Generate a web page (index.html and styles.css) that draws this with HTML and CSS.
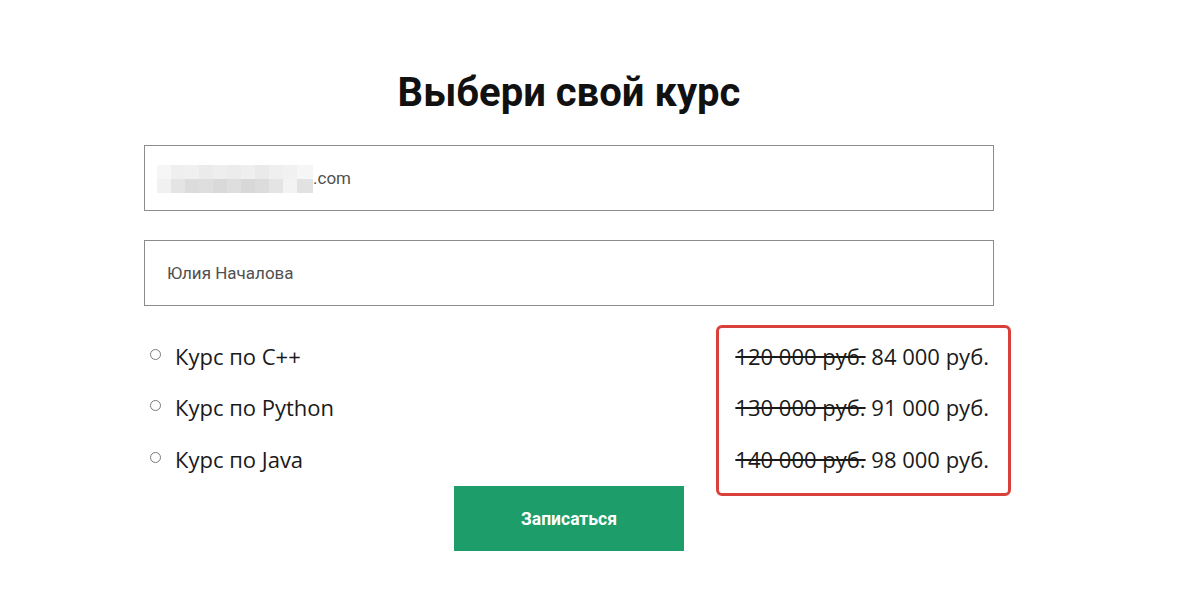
FILE: index.html
```html
<!DOCTYPE html>
<html lang="ru">
<head>
<meta charset="utf-8">
<title>Выбери свой курс</title>
<link rel="stylesheet" href="styles.css">
</head>
<body>
<main class="page">
  <h1 class="title">Выбери свой курс</h1>
  <div class="field field-email"><span class="blur"></span><span class="field-text">.com</span></div>
  <div class="field field-name"><span class="field-text">Юлия Началова</span></div>
  <div class="options">
    <div class="row">
      <label class="opt"><span class="radio"></span>Курс по C++</label>
      <div class="price"><s>120 000 руб.</s> 84 000 руб.</div>
    </div>
    <div class="row">
      <label class="opt"><span class="radio"></span>Курс по Python</label>
      <div class="price"><s>130 000 руб.</s> 91 000 руб.</div>
    </div>
    <div class="row">
      <label class="opt"><span class="radio"></span>Курс по Java</label>
      <div class="price"><s>140 000 руб.</s> 98 000 руб.</div>
    </div>
    <div class="highlight"></div>
  </div>
  <button class="submit">Записаться</button>
</main>
</body>
</html>
```
FILE: styles.css
```css
html, body {
  margin: 0;
  background: #fff;
}
.page {
  width: 850px;
  margin-left: 144px;
  padding-top: 68px;
  font-family: Roboto, "Liberation Sans", sans-serif;
}
.title {
  margin: 0 0 27px;
  font: 700 40px/50px Roboto, "Liberation Sans", sans-serif;
  color: #111;
  text-align: center;
}
.field {
  box-sizing: border-box;
  height: 66px;
  border: 1px solid #8c8c8c;
  margin-bottom: 29px;
  display: flex;
  align-items: center;
  font-size: 17px;
  color: #505050;
}
.field-email {
  padding-left: 12px;
}
.field-name {
  padding-left: 22px;
  margin-bottom: 24px;
}
.blur {
  display: block;
  width: 156px;
  height: 28px;
  margin-top: 2px;
  background:
    linear-gradient(to right, #f6f6f6 0 14px, #efefef 14px 28px, #f0f0f0 28px 42px, #ebebeb 42px 56px, #eeeeee 56px 70px, #ececec 70px 84px, #efefef 84px 98px, #eaeaea 98px 112px, #efefef 112px 126px, #f1f1f1 126px 140px, #f6f6f6 140px 156px) top / 100% 50% no-repeat,
    linear-gradient(to right, #f1f1f1 0 14px, #e4e4e4 14px 28px, #dcdcdc 28px 42px, #dedede 42px 56px, #d9d9d9 56px 70px, #dedede 70px 84px, #d8d8d8 84px 98px, #dcdcdc 98px 112px, #e4e4e4 112px 126px, #f3f3f3 126px 140px, #e2e2e2 140px 156px) bottom / 100% 50% no-repeat;
}
.options {
  position: relative;
  padding-right: 5px;
}
.row {
  height: 51.5px;
  display: flex;
  align-items: center;
  justify-content: space-between;
  font: 400 22px "Open Sans", "Noto Sans", sans-serif;
  color: #1a1a1a;
}
.opt {
  display: flex;
  align-items: center;
  padding-left: 6px;
}
.radio {
  box-sizing: border-box;
  width: 11px;
  height: 11px;
  border: 1px solid #7a7a7a;
  border-radius: 50%;
  margin-right: 14px;
  margin-top: -3px;
}
.price s {
  text-decoration-thickness: 1.5px;
}
.highlight {
  position: absolute;
  left: 572px;
  top: -5px;
  width: 295px;
  height: 171px;
  box-sizing: border-box;
  border: 3px solid #d9403a;
  border-radius: 6px;
}
.submit {
  display: block;
  margin: 1.5px auto 0;
  width: 230px;
  height: 65px;
  border: 0;
  background: #1d9d69;
  color: #fff;
  font: 700 17.5px Roboto, "Liberation Sans", sans-serif;
}
```
